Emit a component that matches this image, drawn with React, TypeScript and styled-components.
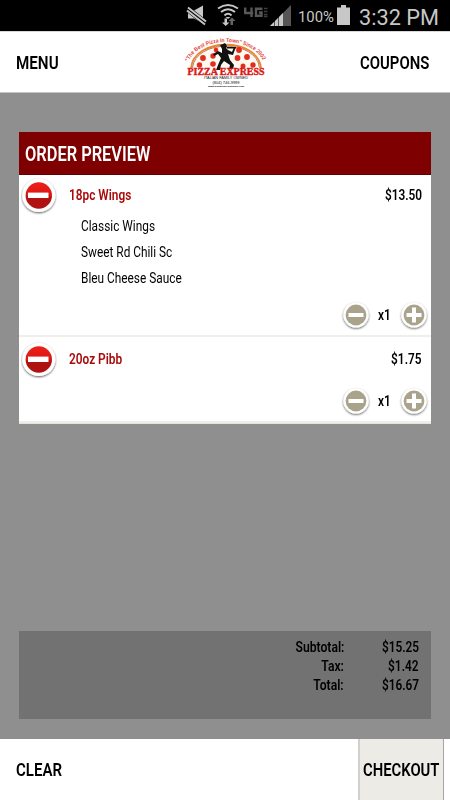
import React from "react";
import styled, { createGlobalStyle } from "styled-components";

const GlobalStyle = createGlobalStyle`
  * { box-sizing: border-box; }
  body { margin: 0; background: #8f8f8f; font-family: Roboto, sans-serif; }
  button { border: 0; padding: 0; background: none; font: inherit; color: inherit; }
`;

const Screen = styled.div`
  width: 450px; height: 800px; display: flex; flex-direction: column;
  overflow: hidden; background: #8f8f8f; color: #000;
`;

const StatusBar = styled.div`
  height: 31px; flex: none; background: #000; display: flex; align-items: flex-start;
`;

const Condensed = styled.span<{ $size: number; $x?: number; $weight?: number; $right?: boolean }>`
  display: inline-block; white-space: nowrap; line-height: 1;
  font-size: ${p => p.$size}px;
  font-weight: ${p => p.$weight ?? 600};
  transform: scaleX(${p => p.$x ?? 0.79});
  transform-origin: ${p => (p.$right ? "right" : "left")} center;
`;

const Header = styled.header`
  height: 62px; flex: none; background: #fff; border-top: 1px solid #d8d8d8; border-bottom: 1px solid #c4c4c4;
  display: grid; grid-template-columns: 1fr 90px 1fr; align-items: center;
  padding: 0 21px 0 16px;
`;

const NavButton = styled.button<{ $right?: boolean }>`
  height: 60px; display: flex; align-items: center;
  justify-content: ${p => (p.$right ? "flex-end" : "flex-start")};
`;

const Main = styled.main`
  flex: 1; display: flex; flex-direction: column; justify-content: space-between;
  padding: 39px 19px 20px;
`;

const Card = styled.section`
  height: 292px; background: #fff; border-bottom: 1px solid #e3e3df;
`;

const CardTitle = styled.h1`
  margin: 0; height: 43px; padding: 1px 6px 0; display: flex; align-items: center;
  background: #7f0000; border-bottom: 1px solid #640000; color: #fff;
`;

const Item = styled.article<{ $height: number; $top: number }>`
  height: ${p => p.$height}px; border-bottom: 2px solid #efefea;
  display: flex; flex-direction: column; justify-content: space-between;
  padding: ${p => p.$top}px 1px 4px 2px;
`;

const ItemHead = styled.div`
  display: grid; grid-template-columns: 48px 1fr auto; align-items: center;
  height: 39px; padding-right: 8px; color: #a80a0a;
`;

const Price = styled.div` color: #000; display: flex; `;

const Options = styled.ul`
  list-style: none; margin: -2px 0 0; padding: 0 0 0 60px; flex: 1;
`;

const Option = styled.li` height: 26px; display: flex; align-items: center; `;

const Quantity = styled.div`
  display: flex; justify-content: flex-end; align-items: center; height: 32px;
`;

const Count = styled.div` width: 26px; display: flex; padding-left: 6px; `;

const IconButton = styled.button` display: flex; `;

const Totals = styled.section`
  height: 88px; background: #727272; display: grid; align-content: start;
  grid-template-columns: 325px 75px; grid-auto-rows: 19px; padding-top: 7px;
`;

const Cell = styled.div` display: flex; justify-content: flex-end; align-items: center; `;

const Footer = styled.footer`
  height: 61px; flex: none; background: #fff; display: flex; justify-content: space-between;
  padding: 0 6px 0 16px;
`;

const CheckoutButton = styled.button`
  width: 86px; background: #ecebe6; border-left: 2px solid #d0d0d0; border-right: 1px solid #a5a5a5;
  display: flex; align-items: center; padding-left: 3px;
`;

const RemoveIcon = () => (
  <svg width="36" height="38" viewBox="0 0 36 38">
    <defs>
      <linearGradient id="red" x1="0" y1="0" x2="0" y2="1">
        <stop offset="0" stopColor="#ee2018" /><stop offset=".52" stopColor="#d91712" />
        <stop offset=".55" stopColor="#b01212" /><stop offset="1" stopColor="#b01212" />
      </linearGradient>
      <filter id="shade" x="-20%" y="-20%" width="140%" height="150%">
        <feDropShadow dx="0" dy="1" stdDeviation=".8" floodOpacity=".65" />
      </filter>
    </defs>
    <circle cx="17.800" cy="18.500" r="16.600" fill="#fff" filter="url(#shade)" />
    <circle cx="17.800" cy="18.500" r="13.200" fill="url(#red)" />
    <rect x="7" y="15.600" width="20.500" height="5.400" fill="#fff" />
  </svg>
);

const StepIcon = ({ plus }: { plus?: boolean }) => (
  <svg width="32" height="32" viewBox="0 0 32 32">
    <circle cx="16" cy="16" r="12.600" fill="#fff" filter="url(#shade)" />
    <circle cx="16" cy="16" r="10.400" fill="#aaa38c" />
    <path d={plus ? "M8.500 16h15M16 8.500v15" : "M8.500 16h15"} stroke="#fff" strokeWidth="4" />
  </svg>
);

const StatusIcons = () => (
  <svg width="450" height="31" viewBox="0 0 450 31" fill="#c7c7c7">
    <path d="M188 10.500h6l9-5v18l-9-5h-6z" />
    <path d="M187 8.500l19 15" stroke="#000" strokeWidth="6" />
    <path d="M188 7.500l18 14M187 10.500l18 14" stroke="#c7c7c7" strokeWidth="1.900" />
    <g fill="none" stroke="#c7c7c7" strokeWidth="2">
      <path d="M218 8.500q10-7 20 0M221 12q7-5.500 14 0M224.500 15.500q3.500-3.500 7 0" />
    </g>
    <path d="M225.500 17h5l-2.500 2zM224.500 18.500h2.500v4h2.500l-3.800 3.500-3.700-3.500h2.500z" />
    <path d="M230.500 25v-4h-2l3.500-3.500 3.500 3.500h-2.500v4z" fill="#666" />
    <g fill="none" stroke="#575757" strokeWidth="2.400">
      <path d="M245.200 7.500v5.500h8M251.500 7.500v9.500M262.500 8.700h-6.500v7h5.500v-3.200h-2.500" />
    </g>
    <path d="M264 8.500h3.500M264 11.500h3.500M264 14.500h3.500M264 16.500h3.500" stroke="#3e3e3e" strokeWidth="1.400" />
    <path d="M270 26l21-21v21z" fill="#555" />
    <path d="M270 26l4-4v4zM275 26v-5l3-3v8zM279 26v-9l4-4v13z" />
    <path d="M337 7.500h4V5h5v2.500h4V25h-13z" />
    <text x="298" y="22" fontSize="15.500" textLength="36" lengthAdjust="spacingAndGlyphs" fontFamily="Roboto">100%</text>
    <text x="359" y="24.700" fontSize="22.500" textLength="80" lengthAdjust="spacingAndGlyphs" fontFamily="Roboto">3:32 PM</text>
  </svg>
);

const Logo = () => (
  <svg width="90" height="60" viewBox="0 0 90 60" fontFamily="Liberation Sans, sans-serif">
    <defs><path id="arch" d="M10 31C20 3 76 3 86 31" /></defs>
    <path d="M13 36C16 5 80 5 83 36z" fill="#fffaf0" />
    <path d="M13 36C16 5 80 5 83 36" fill="none" stroke="#e8862e" strokeWidth="1.800" />
    <path d="M14.500 36C17 7 79 7 81.500 36" fill="none" stroke="#8d2a14" strokeWidth=".6" />
    <g fill="#e32b1e">
      <circle cx="25" cy="26" r="2.900" /><circle cx="35" cy="24" r="2.700" /><circle cx="21.500" cy="33" r="2.700" />
      <circle cx="35" cy="32" r="2.800" /><circle cx="38" cy="18" r="2.300" /><circle cx="61" cy="18" r="2.900" />
      <circle cx="69" cy="25" r="2.900" /><circle cx="59.500" cy="26" r="2.900" /><circle cx="75" cy="33" r="2.700" />
      <circle cx="65" cy="34" r="2.500" />
    </g>
    <g fill="#111">
      <path d="M44 17l3-2 3 3 4 2 2-5 1.500 1-2.500 7-5-1 2 6 4 5-1 4h-4l1-4-6-4-3 4-1 5h-4l2-5 3-7-3-4-4 2-1-2 5-3 4 2z" />
      <path d="M42 13l3-1 2-1 2 3-1 3h-4zM49 15h9v1.400h-9z" />
    </g>
    <text fontSize="5.600" fill="#e43d34" fontWeight="700"><textPath href="#arch" startOffset="1" textLength="88" lengthAdjust="spacingAndGlyphs">"The Best Pizza In Town" Since 2002</textPath></text>
    <text x="9.500" y="43" fontSize="9.400" fontWeight="700" fill="#d91a12" stroke="#d91a12" strokeWidth=".4" fontFamily="Liberation Serif, serif" textLength="77" lengthAdjust="spacingAndGlyphs">PIZZA EXPRESS</text>
    <g fill="#111" fontSize="4.300" textAnchor="middle">
      <text x="48" y="47.300" textLength="44" lengthAdjust="spacingAndGlyphs">ITALIAN FAMILY OWNED</text>
      <text x="48" y="51.500" textLength="27" lengthAdjust="spacingAndGlyphs">(804) 746-9999</text>
      <text x="48" y="54.800" fontSize="2.500" fontWeight="700" textLength="36" lengthAdjust="spacingAndGlyphs">www.pizzaexpressitalian.com</text>
    </g>
  </svg>
);

type OrderItem = { name: string; price: string; height: number; top: number; options: string[] };

const items: OrderItem[] = [
  { name: "18pc Wings", price: "$13.50", height: 162, top: 1, options: ["Classic Wings", "Sweet Rd Chili Sc", "Bleu Cheese Sauce"] },
  { name: "20oz Pibb", price: "$1.75", height: 86, top: 3, options: [] },
];

const totals = [["Subtotal:", "$15.25"], ["Tax:", "$1.42"], ["Total:", "$16.67"]];

export default function App() {
  return (
    <>
      <GlobalStyle />
      <Screen>
        <StatusBar><StatusIcons /></StatusBar>
        <Header>
          <NavButton><Condensed $size={19} $x={0.8}>MENU</Condensed></NavButton>
          <Logo />
          <NavButton $right><Condensed $size={19} $x={0.785} $right>COUPONS</Condensed></NavButton>
        </Header>
        <Main>
          <Card>
            <CardTitle><Condensed $size={20} $x={0.82}>ORDER PREVIEW</Condensed></CardTitle>
            {items.map(item => (
              <Item key={item.name} $height={item.height} $top={item.top}>
                <ItemHead>
                  <IconButton aria-label="Remove"><RemoveIcon /></IconButton>
                  <Condensed $size={15}>{item.name}</Condensed>
                  <Price><Condensed $size={15} $x={0.79} $right>{item.price}</Condensed></Price>
                </ItemHead>
                {item.options.length > 0 && (
                  <Options>
                    {item.options.map(o => <Option key={o}><Condensed $size={15} $x={0.79} $weight={450}>{o}</Condensed></Option>)}
                  </Options>
                )}
                <Quantity>
                  <IconButton aria-label="Decrease"><StepIcon /></IconButton>
                  <Count><Condensed $size={15}>x1</Condensed></Count>
                  <IconButton aria-label="Increase"><StepIcon plus /></IconButton>
                </Quantity>
              </Item>
            ))}
          </Card>
          <Totals>
            {totals.map(([label, value]) => (
              <React.Fragment key={label}>
                <Cell><Condensed $size={15} $x={0.81} $right>{label}</Condensed></Cell>
                <Cell><Condensed $size={15} $x={0.79} $right>{value}</Condensed></Cell>
              </React.Fragment>
            ))}
          </Totals>
        </Main>
        <Footer>
          <NavButton><Condensed $size={19}>CLEAR</Condensed></NavButton>
          <CheckoutButton><Condensed $size={19} $x={0.78}>CHECKOUT</Condensed></CheckoutButton>
        </Footer>
      </Screen>
    </>
  );
}
